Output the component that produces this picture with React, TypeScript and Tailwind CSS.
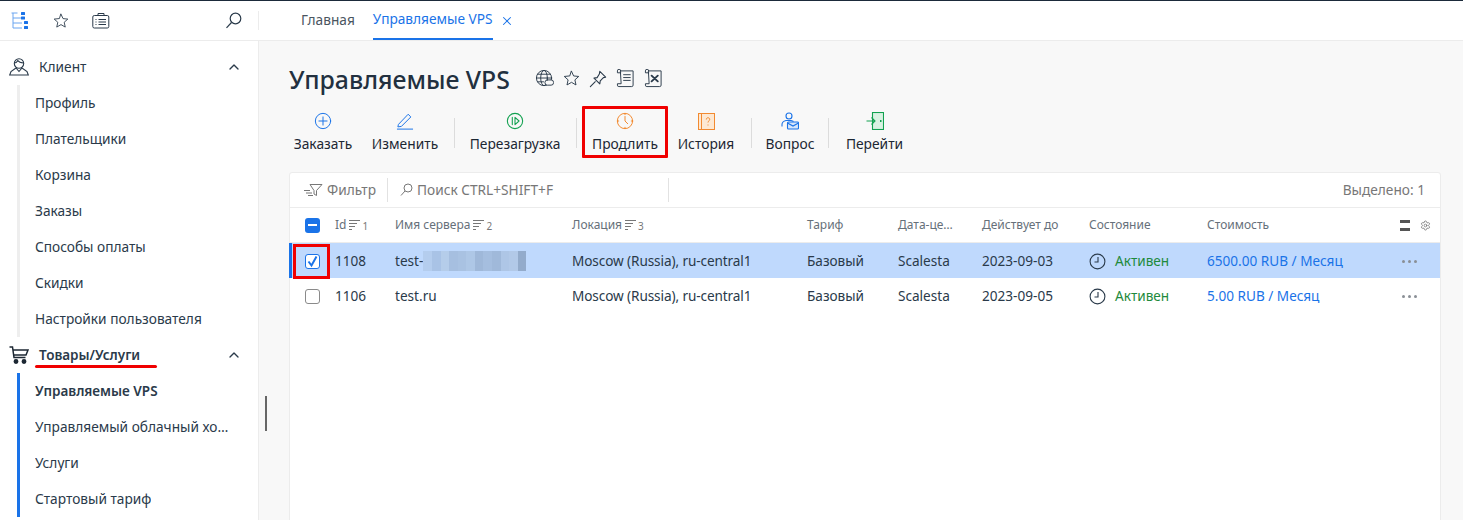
import React from "react";
import { ChevronUp, X, Settings } from "lucide-react";

const Svg = ({ size = 20, className = "", sw = 1.3, children }: { size?: number; className?: string; sw?: number; children: React.ReactNode }) => (
  <svg width={size} height={size} viewBox="0 0 20 20" fill="none" stroke="currentColor" strokeWidth={sw} strokeLinecap="round" strokeLinejoin="round" className={className}>
    {children}
  </svg>
);

const StarIcon = ({ size = 18 }: { size?: number }) => (
  <Svg size={size} sw={1.1}><path d="M10 1.500l2.500 5.500 6 .6-4.500 4 1.300 6L10 14.500l-5.300 3.100 1.300-6-4.500-4 6-.6z" /></Svg>
);
const SortIcon = ({ n }: { n: string }) => (
  <span className="ml-[2px] inline-flex items-end text-[#777]">
    <svg width="13" height="12" viewBox="0 0 13 12" stroke="currentColor" strokeWidth="1"><path d="M1 1.500h11M1 4.500h8M1 7.500h6M1 10.500h3" /></svg>
    <span className="ml-[1px] text-[10px] leading-[10px]">{n}</span>
  </span>
);

const sideA = ["Профиль", "Плательщики", "Корзина", "Заказы", "Способы оплаты", "Скидки", "Настройки пользователя"];
const sideB = ["Управляемые VPS", "Управляемый облачный хостинг", "Услуги", "Стартовый тариф"];

const cols = "grid grid-cols-[45px_60px_177px_235px_91px_84px_107px_118px_193px_39px] items-center";

const Row = ({ id, name, price, selected }: { id: string; name: React.ReactNode; price: string; selected?: boolean }) => (
  <div className={`${cols} relative h-[35px] pt-[2px] text-[13.6px] text-[#2a3a4a] ${selected ? "bg-[#bfd9fd]" : "bg-white"}`}>
    {selected && <div className="absolute inset-y-0 -left-px w-[3px] bg-[#1a73e8]" />}
    <div className="flex justify-center">
      {selected ? (
        <span className="flex h-[15px] w-[15px] items-center justify-center rounded-[3px] border border-[#1a73e8] bg-white text-[#1a73e8]">
          <svg width="13" height="13" viewBox="0 0 13 13" fill="none" stroke="currentColor" strokeWidth="2"><path d="M2.500 6.500l3 4 5-9" /></svg>
        </span>
      ) : (
        <span className="h-[15px] w-[15px] rounded-[3px] border border-[#8a8a8a] bg-white" />
      )}
    </div>
    <div>{id}</div>
    <div>{name}</div>
    <div className="tracking-[-0.1px]">Moscow (Russia), ru-central1</div>
    <div>Базовый</div>
    <div>Scalesta</div>
    <div>{id === "1108" ? "2023-09-03" : "2023-09-05"}</div>
    <div className="flex items-center gap-[9px]">
      <svg width="17" height="17" viewBox="0 0 17 17" fill="none" stroke="#2a3a4a" strokeWidth="1.100"><circle cx="8.500" cy="8.500" r="7.400" /><path d="M9 4v5H5.500" /></svg>
      <span className="text-[#1e8a3c]">Активен</span>
    </div>
    <div className="text-[#1a73e8]">{price}</div>
    <div className="flex gap-[3px] pl-[2px]">
      <i className="h-[2.500px] w-[3px] rounded-full bg-[#8a8f96]" /><i className="h-[2.500px] w-[3px] rounded-full bg-[#8a8f96]" /><i className="h-[2.500px] w-[3px] rounded-full bg-[#8a8f96]" />
    </div>
  </div>
);

const Tool = ({ label, icon, cls = "", boxed }: { label: string; icon: React.ReactNode; cls?: string; boxed?: boolean }) => (
  <div className={`flex flex-col items-center justify-start ${boxed ? "h-[52px] border-[3px] border-[#f00000] rounded-[1px] px-[7px] pt-[3px]" : "h-[52px] pt-[6px]"} ${cls}`}>
    <div className="flex h-[18px] items-center">{icon}</div>
    <div className="mt-[4px] text-[13.800px] leading-[20px] text-[#1c2733] whitespace-nowrap">{label}</div>
  </div>
);
const Sep = () => <div className="h-[30px] w-px bg-[#dcdcdc] mt-[12px]" />;

const blur = ["#b4cdee", "#a9c3e6", "#b5cdea", "#a6bfe0", "#a9c2e2", "#aec7e6", "#9fb8d9", "#a5bedf", "#a0b9da", "#aec6e6", "#b2c9e8", "#93abcb"];

export default function App() {
  return (
    <div className="relative flex h-[520px] w-[1463px] flex-col overflow-hidden border-t border-[#1b2a3a] bg-white text-[13.700px] font-['Noto_Sans',sans-serif] text-[#2a3a4a]">
      <header className="flex h-[40px] shrink-0 items-center border-b border-[#ececec]">
        <div className="flex w-[259px] shrink-0 items-center pl-[11px] pr-[16px] h-[19px] border-r border-[#ececec]">
          <svg width="18" height="18" viewBox="0 0 18 18" fill="none" stroke="#6aa5f0" strokeWidth="1"><path d="M.500 1h6M2 1v15h9M2 6h8M2 11h9" /><g fill="#1a73e8" stroke="none"><rect x="10" y="0" width="4" height="3" rx=".5" /><rect x="10" y="4.500" width="4" height="3" rx=".5" /><rect x="13" y="9" width="4" height="3" rx=".5" /><rect x="13" y="14" width="4" height="3" rx=".5" /></g></svg>
          <span className="ml-[24px] text-[#2a3a4a]"><StarIcon size={16} /></span>
          <svg className="ml-[23px]" width="18" height="17" viewBox="0 0 18 17" fill="none" stroke="#2a3a4a" strokeWidth="1"><rect x=".8" y="3.500" width="16" height="12.500" rx="1.500" /><path d="M6 3.500V1.500h6v2M6.500 7.500h7.500M6.500 10h7.500M6.500 12.500h7.500M3.500 7.500h1M3.500 10h1M3.500 12.500h1" /></svg>
          <span className="ml-auto text-[#2a3a4a]">
            <svg width="17" height="17" viewBox="0 0 17 17" fill="none" stroke="currentColor" strokeWidth="1.200"><circle cx="10.500" cy="6.500" r="5.300" /><path d="M6.500 10.500L1.500 15.800" /></svg>
          </span>
        </div>
        <div className="flex h-full items-stretch pl-[42px]">
          <div className="flex items-center text-[#4a5560]">Главная</div>
          <div className="ml-[18px] flex items-center border-b-2 border-[#1a73e8] text-[#1a73e8]">Управляемые VPS</div>
          <div className="flex items-center pl-[7px] text-[#1a73e8]"><X size={14} strokeWidth={1.800} /></div>
        </div>
      </header>

      <div className="flex min-h-0 flex-1">
        <aside className="relative w-[259px] shrink-0 border-r border-[#ececec] bg-white">
          <div className="flex h-[36px] mt-[8px] items-center pl-[9px] pr-[16px]">
            <svg width="20" height="20" viewBox="0 0 20 20" fill="none" stroke="#2a3a4a" strokeWidth="1.100"><circle cx="10" cy="6.500" r="4.700" /><path d="M5.300 6c2 0 3-1.500 3.500-2.500 1 1.500 3 2.300 5.800 2.500M7 11l-5 3.500-1.300 3.500h18.600L18 14.500 13 11l-3 3.500z" /></svg>
            <span className="ml-[10px]">Клиент</span>
            <ChevronUp className="ml-auto" size={16} strokeWidth={2} />
          </div>
          <div className="ml-[17px] border-l-[3px] border-[#eeeeee]">
            {sideA.map((s) => (<div key={s} className="flex h-[36px] items-center pl-[15px]">{s}</div>))}
          </div>
          <div className="relative flex h-[36px] items-center pl-[9px] pr-[16px]">
            <svg width="20" height="20" viewBox="0 0 20 20" fill="none" stroke="#1c2733" strokeWidth="1.500"><path d="M.500 2h3l1.500 10.500h11.500M4 5h15l-2 5H5" /><circle cx="7" cy="16.500" r="1.700" fill="#1c2733" /><circle cx="15" cy="16.500" r="1.700" fill="#1c2733" /></svg>
            <span className="ml-[10px] font-semibold text-[13.500px]">Товары/Услуги</span>
            <ChevronUp className="ml-auto" size={16} strokeWidth={2} />
            <div className="absolute left-[35px] top-[28px] h-[3px] w-[122px] rounded-sm bg-[#f00000]" />
          </div>
          <div className="ml-[17px] border-l-[3px] border-[#1a73e8]">
            {sideB.map((s, i) => (
              <div key={s} className={`flex h-[36px] items-center pl-[15px] pr-[27px] ${i === 0 ? "font-semibold text-[13.500px]" : ""}`}>
                <span className="truncate">{s}</span>
              </div>
            ))}
          </div>
        </aside>
        <div className="absolute left-[265px] top-[395px] h-[35px] w-[2px] bg-[#666]" />

        <main className="min-w-0 flex-1 bg-[#f8f8f8] pl-[30px] pr-[22px]">
          <div className="flex h-[65px] items-center pb-[5px] pt-[15px]">
            <h1 className="text-[24.800px] font-medium leading-[32px] text-[#22303f]">Управляемые VPS</h1>
            <div className="ml-[25px] flex items-center gap-[9px] text-[#2a3a4a]">
              <Svg size={19} sw={1}><circle cx="9.500" cy="9.500" r="8" /><ellipse cx="9.500" cy="9.500" rx="3.500" ry="8" /><path d="M1.500 9.500h16M3 5.500h13M3 13.500h6" /><rect x="10.500" y="11.500" width="9" height="5.500" rx="2.500" fill="#f8f8f8" /></Svg>
              <StarIcon size={17} />
              <Svg size={18} sw={1.200}><path d="M12 1.500l6.500 6.500-2.500.5-3.500 3.500-.5 3.500-6.500-6.500 3.500-.5L11.500 4.500zM7 13l-5.500 5.500" /></Svg>
              <Svg size={19} sw={1}><path d="M5 2h13v15a1.500 1.500 0 01-1.500 1.500H3A1.500 1.500 0 011.500 17v-1.500H5zM5 2a1.700 1.700 0 00-3.500 0v2H5M8 6h7M8 9h7M8 12h7" /></Svg>
              <Svg size={19} sw={1}><path d="M5 2h13v15a1.500 1.500 0 01-1.500 1.500H3A1.500 1.500 0 011.500 17v-1.500H5zM5 2a1.700 1.700 0 00-3.500 0v2H5" /><path d="M8 7l6.500 6M14.500 7L8 13" strokeWidth="2" /></Svg>
            </div>
          </div>

          <div className="flex h-[52px] items-start">
            <Tool label="Заказать" cls="ml-[5px] w-[58px]" icon={<Svg size={18} sw={1.100} className="text-[#1a73e8]"><circle cx="10" cy="10" r="8.500" /><path d="M10 5.500v9M5.500 10h9" /></Svg>} />
            <Tool label="Изменить" cls="ml-[20px] w-[66px]" icon={<Svg size={18} sw={1.100} className="text-[#1a73e8]"><path d="M3 13.500L13.500 2.500l3 3L6 16l-3.500.5zM1.500 19h17" /></Svg>} />
            <div className="ml-[16px]"><Sep /></div>
            <Tool label="Перезагрузка" cls="ml-[15px] w-[90px]" icon={<Svg size={18} sw={1.200} className="text-[#12a150]"><circle cx="10" cy="10" r="8.500" /><path d="M7 6v8M10 6l4.500 4-4.500 4z" /></Svg>} />
            <div className="ml-[16px]"><Sep /></div>
            <Tool boxed label="Продлить" cls="ml-[5px] w-[86px]" icon={<Svg size={18} sw={1.100} className="text-[#f28a30]"><circle cx="10" cy="10" r="8.500" /><path d="M10 5v5l3 3M10 1.500v1.500M1.500 10H3M17 10h1.500M10 17v1.500" /></Svg>} />
            <Tool label="История" cls="ml-[10px] w-[56px]" icon={<svg width="17" height="17" viewBox="0 0 17 17" fill="#fde8d2" stroke="#f28a30" strokeWidth="1"><rect x=".5" y=".5" width="16" height="16" /><path d="M3.500 .5v16" /><path d="M8.300 6.500a1.700 1.700 0 113 1c-.8.700-1.300 1-1.300 2M10 11.500v1" fill="none" /></svg>} />
            <div className="ml-[17px]"><Sep /></div>
            <Tool label="Вопрос" cls="ml-[14px] w-[48px]" icon={<svg width="18" height="18" viewBox="0 0 18 18" fill="none" stroke="#1a73e8" strokeWidth="1.100"><circle cx="8" cy="4" r="3" /><path d="M1 14.500v-2c0-2 2-3.500 4-4h5c1 .3 2 .7 2.500 1" /><rect x="6.500" y="10" width="11" height="7" rx="1" fill="#d6e6fb" /><path d="M6.500 11l5.500 3 5.500-3" /></svg>} />
            <div className="ml-[14px]"><Sep /></div>
            <Tool label="Перейти" cls="ml-[17px] w-[57px]" icon={<svg width="18" height="18" viewBox="0 0 18 18" fill="none" stroke="#12a150" strokeWidth="1.100"><rect x="6.500" y=".5" width="11" height="17" fill="#d9f2e2" /><path d="M.500 9h8M5.500 5.500L9 9l-3.500 3.500" /><path d="M14 9h1.500" strokeWidth="2" /></svg>} />
          </div>

          <div className="mt-[14px] h-[400px] rounded-t-[3px] border border-[#ececec] bg-white">
            <div className="flex h-[35px] items-center border-b border-[#ececec] text-[#777]">
              <div className="flex items-center pl-[13px]">
                <svg width="20" height="14" viewBox="0 0 20 14" fill="none" stroke="#777" strokeWidth="1"><path d="M7 1.500h12L13.500 7.500v5L11 11V7.500zM1 7.500h6M3 10h6M5 12.500h5" /></svg>
                <span className="ml-[4px]">Фильтр</span>
              </div>
              <div className="ml-[11px] h-[24px] w-px bg-[#e2e2e2]" />
              <div className="ml-[12px] flex w-[268px] items-center">
                <svg width="13" height="13" viewBox="0 0 13 13" fill="none" stroke="#777" strokeWidth="1"><circle cx="8" cy="5" r="4" /><path d="M5 8l-4 4.500" /></svg>
                <span className="ml-[4px] whitespace-nowrap">Поиск CTRL+SHIFT+F</span>
              </div>
              <div className="h-[24px] w-px bg-[#e2e2e2]" />
              <div className="ml-auto pr-[15px]">Выделено: 1</div>
            </div>
            <div className={`${cols} h-[35px] border-b border-[#ececec] text-[12px] text-[#66707a]`}>
              <div className="flex justify-center">
                <span className="flex h-[15px] w-[15px] items-center justify-center rounded-[3px] bg-[#1a73e8]"><span className="h-[2px] w-[9px] bg-white" /></span>
              </div>
              <div className="flex items-center">Id<SortIcon n="1" /></div>
              <div className="flex items-center">Имя сервера<SortIcon n="2" /></div>
              <div className="flex items-center">Локация<SortIcon n="3" /></div>
              <div>Тариф</div>
              <div>Дата-це…</div>
              <div>Действует до</div>
              <div>Состояние</div>
              <div>Стоимость</div>
              <div className="flex items-center">
                <span className="flex h-[11px] w-[10px] flex-col justify-between"><i className="h-[3px] bg-[#555]" /><i className="h-[3px] bg-[#555]" /></span>
                <Settings className="ml-[10px] text-[#666]" size={11} strokeWidth={1.500} />
              </div>
            </div>
            <Row selected id="1108" price="6500.00 RUB / Месяц" name={
              <span className="flex items-center">test-
                <span className="flex h-[20px] w-[103px]">
                  {blur.map((c, i) => (<span key={i} className="h-full flex-1" style={{ background: c }} />))}
                </span>
              </span>
            } />
            <Row id="1106" name="test.ru" price="5.00 RUB / Месяц" />
          </div>
        </main>
      </div>

      <div className="absolute left-[293px] top-[243px] h-[35px] w-[37px] border-[3px] border-[#f00000]" />
    </div>
  );
}
